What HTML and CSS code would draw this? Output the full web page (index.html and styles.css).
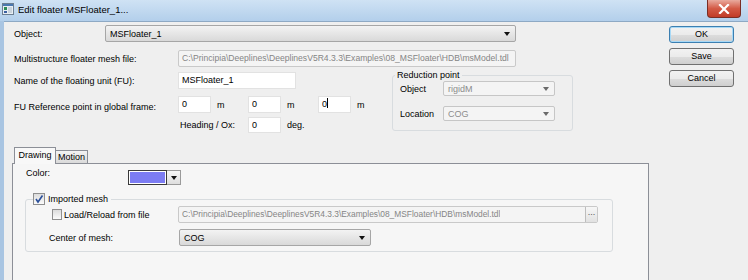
FILE: index.html
```html
<!DOCTYPE html>
<html lang="en">
<head>
    <meta charset="utf-8">
    <title>Edit floater MSFloater_1...</title>
    <link rel="stylesheet" href="styles.css">
</head>
<body>
    <div class="window">
        <div class="titlebar">
            <svg class="app-icon" width="12" height="12" viewBox="0 0 12 12">
                <rect x="0.5" y="0.5" width="11" height="11" fill="#e8eef4" stroke="#6d7f92"/>
                <rect x="1" y="1" width="10" height="2" fill="#4a78b0"/>
                <rect x="2" y="4" width="3" height="3" fill="#2e8b57"/>
                <rect x="2" y="8" width="3" height="2" fill="#3a5fa0"/>
                <rect x="6" y="4" width="4" height="6" fill="#c9d3dc"/>
            </svg>
            <span class="title">Edit floater MSFloater_1...</span>
            <div class="close-btn">
                <svg width="12" height="10" viewBox="0 0 12 10">
                    <path d="M2 1 L10 9 M10 1 L2 9" stroke="#fff" stroke-width="2.2" stroke-linecap="square"/>
                </svg>
            </div>
        </div>

        <div class="client">
            <div class="form">
                <div class="row">
                    <span class="lbl lbl-object">Object:</span>
                    <div class="combo combo-object"><span>MSFloater_1</span><i class="arrow"></i></div>
                </div>

                <div class="row row-mesh">
                    <span class="lbl lbl-wide">Multistructure floater mesh file:</span>
                    <div class="field field-disabled field-mesh"><span class="path path-top">C:\Principia\Deeplines\DeeplinesV5R4.3.3\Examples\08_MSFloater\HDB\msModel.tdl</span></div>
                </div>

                <div class="upper">
                    <div class="upper-left">
                        <div class="row row-flat">
                            <span class="lbl lbl-wide">Name of the floating unit (FU):</span>
                            <div class="field field-name">MSFloater_1</div>
                        </div>

                        <div class="ref-block">
                            <span class="lbl lbl-wide lbl-ref">FU Reference point in global frame:</span>
                            <div class="ref-grid">
                                <div class="ref-line">
                                    <div class="unit-cell"><div class="field field-num">0</div><span>m</span></div>
                                    <div class="unit-cell"><div class="field field-num">0</div><span>m</span></div>
                                    <div class="unit-cell"><div class="field field-num">0<i class="caret"></i></div><span>m</span></div>
                                </div>
                                <div class="ref-line ref-heading">
                                    <div class="unit-cell"><span class="heading-lbl">Heading / Ox:</span></div>
                                    <div class="unit-cell"><div class="field field-num">0</div><span>deg.</span></div>
                                </div>
                            </div>
                        </div>
                    </div>

                    <fieldset class="group group-reduction">
                        <legend>Reduction point</legend>
                        <div class="red-row">
                            <span class="red-lbl">Object</span>
                            <div class="combo combo-disabled combo-small"><span>rigidM</span><i class="arrow"></i></div>
                        </div>
                        <div class="red-row red-row-loc">
                            <span class="red-lbl">Location</span>
                            <div class="combo combo-disabled combo-small"><span>COG</span><i class="arrow"></i></div>
                        </div>
                    </fieldset>
                </div>

                <div class="tabs">
                    <div class="tabbar">
                        <div class="tab tab-active">Drawing</div>
                        <div class="tab">Motion</div>
                    </div>
                    <div class="panel">
                        <div class="color-row">
                            <span class="lbl lbl-color">Color:</span>
                            <div class="color-pick">
                                <div class="swatch"></div>
                                <div class="color-drop"><i class="arrow"></i></div>
                            </div>
                        </div>

                        <fieldset class="group group-mesh">
                            <legend>
                                <span class="check check-on">
                                    <svg width="10" height="10" viewBox="0 0 10 10">
                                        <path d="M2 5 L4 8 L8.5 1.5" fill="none" stroke="#2a4f9a" stroke-width="1.6"/>
                                    </svg>
                                </span>
                                <span>Imported mesh</span>
                            </legend>
                            <div class="mesh-row">
                                <div class="mesh-lbl">
                                    <span class="check check-small"></span>
                                    <span class="load-lbl">Load/Reload from file</span>
                                </div>
                                <div class="field field-disabled field-file">
                                    <span class="path">C:\Principia\Deeplines\DeeplinesV5R4.3.3\Examples\08_MSFloater\HDB\msModel.tdl</span>
                                    <span class="browse">...</span>
                                </div>
                            </div>
                            <div class="mesh-row mesh-row-center">
                                <div class="mesh-lbl">Center of mesh:</div>
                                <div class="combo combo-center"><span>COG</span><i class="arrow"></i></div>
                            </div>
                        </fieldset>
                    </div>
                </div>
            </div>

            <div class="buttons">
                <div class="btn btn-default">OK</div>
                <div class="btn">Save</div>
                <div class="btn">Cancel</div>
            </div>
        </div>
    </div>
</body>
</html>
```

FILE: styles.css
```css
* {
    box-sizing: border-box;
}

body {
    margin: 0;
    font-family: "Liberation Sans", Arial, sans-serif;
    font-size: 9px;
    color: #000;
}

.window {
    width: 748px;
    height: 280px;
    overflow: hidden;
    display: flex;
    flex-direction: column;
    background: #a9c5e2;
}

/* title bar */
.titlebar {
    height: 21px;
    flex: none;
    display: flex;
    align-items: flex-start;
    padding-left: 2px;
    background: linear-gradient(#cfe2f4, #b3cfeb);
}

.app-icon {
    margin-top: 3px;
}

.title {
    margin-left: 4px;
    line-height: 19px;
    font-size: 9.5px;
}

.close-btn {
    margin-left: auto;
    margin-right: 7px;
    width: 34px;
    height: 18px;
    border: 1px solid #7a2e25;
    border-top: none;
    border-radius: 0 0 4px 4px;
    background: linear-gradient(#e9aa9e, #d35a45 50%, #c13b27);
    display: flex;
    align-items: center;
    justify-content: center;
}

/* client area */
.client {
    flex: 1;
    min-height: 0;
    display: flex;
    margin-left: 4px;
    border-top: 1px solid #8ea9c4;
    background: #efefef;
    overflow: hidden;
}

.form {
    width: 645px;
    flex: none;
    display: flex;
    flex-direction: column;
    padding-top: 3px;
}

.form > * {
    flex-shrink: 0;
}

.row {
    display: flex;
    align-items: center;
    height: 17px;
    padding-left: 10px;
}

.row-flat {
    padding-left: 0;
}

.row-mesh {
    margin-top: 8px;
}

.lbl-object {
    width: 91px;
}

.lbl-wide {
    width: 164px;
    flex: none;
}

/* inputs */
.field {
    height: 17px;
    padding: 0 3px;
    line-height: 15px;
    background: #fff;
    border: 1px solid #e2e2e2;
    white-space: nowrap;
    overflow: hidden;
}

.field-disabled {
    background: #f4f4f4;
    border: 1px solid #c9c9c9;
    border-radius: 2px;
    color: #858585;
}

.path {
    font-size: 8.4px;
    overflow: hidden;
}

.path-top {
    font-size: 8.6px;
}

.field-mesh {
    width: 338px;
}

.field-name {
    width: 118px;
}

.field-num {
    width: 33px;
    margin-right: 6px;
}

.caret {
    display: inline-block;
    width: 1px;
    height: 10px;
    background: #000;
    vertical-align: -1px;
}

/* combos */
.combo {
    display: flex;
    align-items: center;
    justify-content: space-between;
    height: 17px;
    padding: 0 5px 0 4px;
    border: 1px solid #a6a6a6;
    border-radius: 2px;
    background: linear-gradient(#f3f3f3, #e6e6e6 50%, #d9d9d9);
}

.combo-object {
    width: 411px;
}

.combo-disabled {
    background: #f4f4f4;
    border-color: #c6c6c6;
    color: #8c8c8c;
}

.arrow {
    width: 0;
    height: 0;
    border-left: 3.5px solid transparent;
    border-right: 3.5px solid transparent;
    border-top: 4px solid #111;
}

.combo-disabled .arrow {
    border-top-color: #6a6a6a;
}

/* upper section */
.upper {
    display: flex;
    align-items: flex-start;
    margin-top: 5px;
}

.upper-left {
    width: 388px;
    flex: none;
    padding-left: 10px;
}

.ref-block {
    display: flex;
    margin-top: 7px;
}

.lbl-ref {
    padding-top: 6px;
}

.ref-line {
    display: flex;
    align-items: center;
    height: 17px;
}

.ref-heading {
    margin-top: 4px;
    height: 16px;
}

.ref-heading .field-num {
    height: 16px;
}

.unit-cell {
    width: 70px;
    display: flex;
    align-items: center;
}

.heading-lbl {
    padding-left: 2px;
}

/* group boxes */
.group {
    margin: 0;
    border: 1px solid #d8dcdf;
    border-radius: 3px;
}

.group legend {
    padding: 0 2px;
}

.group-reduction {
    width: 181px;
    height: 61px;
    margin-top: -2px;
    padding: 0 0 0 7px;
}

.group-reduction legend {
    margin-left: -5px;
    line-height: 10px;
}

.red-row {
    display: flex;
    align-items: center;
    margin-top: 1px;
}

.red-row-loc {
    margin-top: 10px;
}

.red-lbl {
    width: 43px;
}

.combo-small {
    width: 112px;
    height: 15px;
}

/* tabs */
.tabs {
    margin-top: 14px;
    margin-left: 8px;
}

.tabbar {
    display: flex;
    align-items: flex-end;
    height: 16px;
    padding-left: 2px;
}

.tab {
    height: 13px;
    width: 32px;
    line-height: 12px;
    text-align: center;
    border: 1px solid #8c8f97;
    border-bottom: none;
    border-left: none;
    background: linear-gradient(#f3f3f3, #dadada);
}

.tab-active {
    position: relative;
    z-index: 1;
    width: 42px;
    height: 17px;
    margin-bottom: -1px;
    line-height: 15px;
    border-left: 1px solid #8c8f97;
    background: #f8f8f8;
}

.panel {
    height: 200px;
    border: 1px solid #8c8f97;
    background: #f6f6f6;
    padding: 6px 0 0 12px;
}

.color-row {
    display: flex;
    align-items: center;
}

.lbl-color {
    width: 102px;
    margin-left: 1px;
    margin-top: -10px;
}

.color-pick {
    display: flex;
}

.swatch {
    width: 39px;
    height: 15px;
    border: 1px solid #3a3a3a;
    box-shadow: inset 0 0 0 1px #fff;
    background: #7c7cf3;
}

.color-drop {
    width: 14px;
    height: 15px;
    display: flex;
    align-items: center;
    justify-content: center;
    border: 1px solid #9a9a9a;
    border-left: none;
    background: linear-gradient(#f6f6f6, #dedede);
}

.group-mesh {
    width: 588px;
    margin-top: 8px;
    padding: 0 0 5px 0;
}

.group-mesh legend {
    margin-left: 7px;
    padding: 0 3px 0 0;
    display: flex;
    align-items: center;
    line-height: 12px;
}

.check {
    display: inline-flex;
    align-items: center;
    justify-content: center;
    width: 12px;
    height: 12px;
    margin-right: 3px;
    border: 1px solid #8f8f8f;
    background: linear-gradient(#dcdcdc, #fbfbfb);
}

.check-small {
    width: 10px;
    height: 11px;
    margin: 0 2px 0 3px;
}

.mesh-row {
    display: flex;
    align-items: center;
    padding-left: 23px;
    margin-top: 1px;
}

.mesh-row-center {
    margin-top: 6px;
}

.mesh-lbl {
    width: 129px;
    display: flex;
    align-items: center;
}

.field-file {
    width: 420px;
    display: flex;
    justify-content: space-between;
    padding-right: 0;
}

.browse {
    flex: none;
    width: 12px;
    height: 15px;
    line-height: 11px;
    text-align: center;
    color: #555;
    border-left: 1px solid #bdbdbd;
    background: linear-gradient(#f7f7f7, #e1e1e1);
}

.combo-center {
    width: 192px;
    margin-left: 1px;
}

/* dialog buttons */
.buttons {
    display: flex;
    flex-direction: column;
    gap: 5px;
    padding: 4px 0 0 20px;
}

.btn {
    width: 65px;
    height: 17px;
    line-height: 15px;
    text-align: center;
    border: 1px solid #707070;
    border-radius: 3px;
    background: linear-gradient(#f2f2f2, #ebebeb 50%, #dddddd 51%, #cfcfcf);
}

.btn-default {
    border-color: #3c7fb1;
    box-shadow: inset 0 0 0 1px #a8d9f6;
}
```
